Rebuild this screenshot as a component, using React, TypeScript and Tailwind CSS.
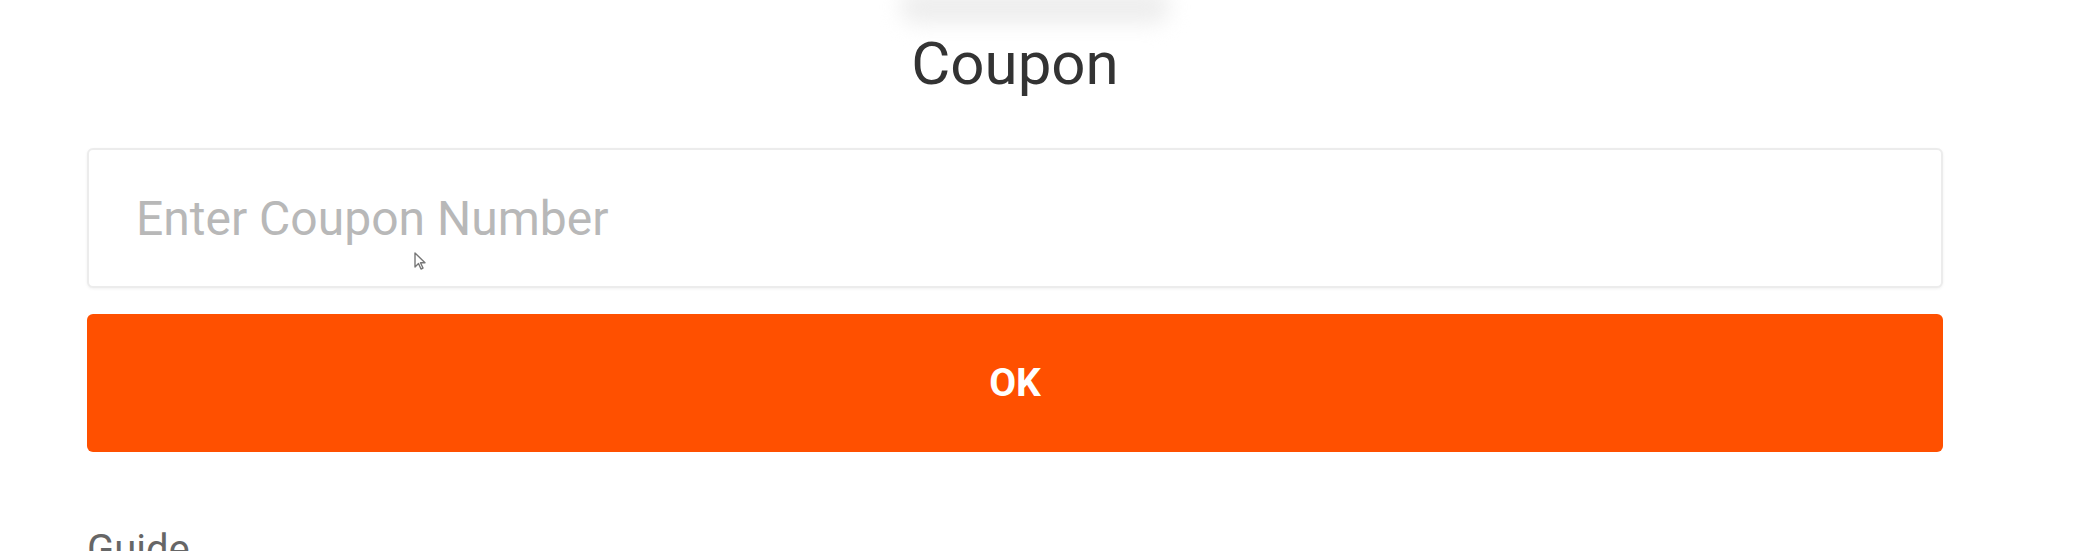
import { useState } from 'react';

export default function App() {
  const [code, setCode] = useState('');

  return (
    <div className="min-h-[551px] w-[2078px] overflow-hidden bg-white font-['Roboto','Liberation_Sans',sans-serif]">
      <div className="ml-[87px] w-[1856px]">
        {/* sheet handle, blurred in the capture */}
        <div className="mx-auto -mt-[10px] h-[34px] w-[270px] translate-x-[20px] rounded-full bg-[#eeeeee] blur-[10px]" />

        <h1 className="mt-[4px] text-center text-[60px] leading-[72px] text-[#333333]">Coupon</h1>

        <div className="relative mt-[48px]">
          <input
            value={code}
            onChange={(e) => setCode(e.target.value)}
            placeholder="Enter Coupon Number"
            className="h-[140px] w-full rounded-[6px] border-2 border-[#ececec] bg-white px-[47px] text-[48px] text-[#333] shadow-[0_1px_3px_rgba(0,0,0,0.06)] outline-none placeholder:text-[#b8b8b8]"
          />
          {/* mouse pointer from the recording */}
          <svg
            className="pointer-events-none absolute left-[326px] top-[104px]"
            width="14"
            height="20"
            viewBox="0 0 14 20"
          >
            <path d="M2 1 L2 15 L5.5 11.5 L8 17 L10 16 L7.5 10.8 L12 10.8 Z" fill="#fff" stroke="#777" strokeWidth="1.4" strokeLinejoin="round" />
          </svg>
        </div>

        <button className="mt-[26px] flex h-[138px] w-full items-center justify-center rounded-[6px] bg-[#ff5000] text-[39px] font-bold text-white">
          OK
        </button>

        <p className="mt-[74px] text-[40px] leading-[48px] text-[#666666]">Guide</p>
      </div>
    </div>
  );
}
